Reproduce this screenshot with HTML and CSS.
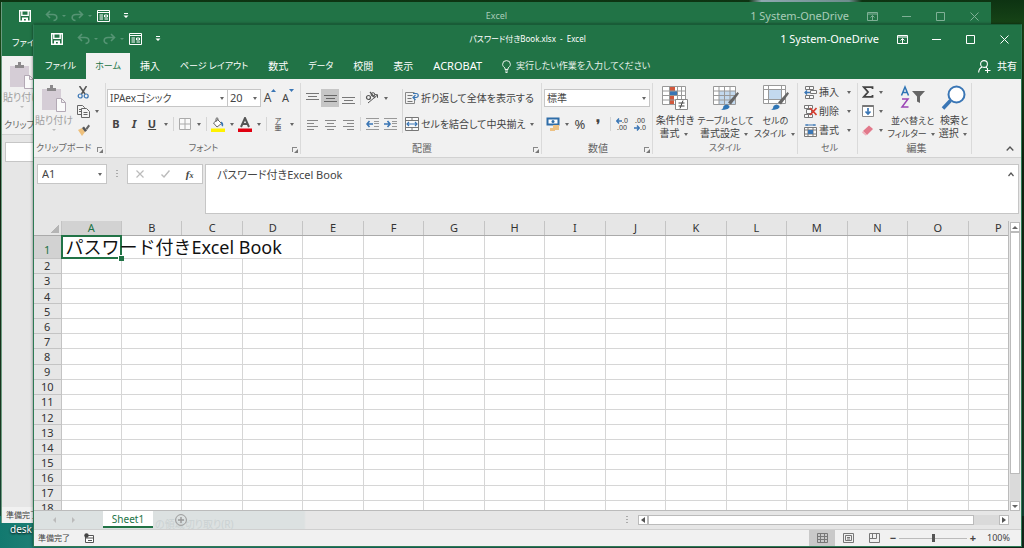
FILE: index.html
```html
<!DOCTYPE html>
<html lang="ja">
<head>
<meta charset="utf-8">
<title>パスワード付きBook.xlsx - Excel</title>
<link rel="stylesheet" href="styles.css">
</head>
<body>
<svg class="defs" aria-hidden="true">
  <symbol id="i-save" viewBox="0 0 12 12"><path fill="none" stroke="currentColor" stroke-width="1.4" d="M.7.7h10.6v10.6H.7zM2.8 1v4.4h6.4V1"/><path fill="currentColor" d="M3 7.5h6V11H6.800V9H5v2H3z"/></symbol>
  <symbol id="i-undo" viewBox="0 0 13 12"><path fill="none" stroke="currentColor" stroke-width="1.600" d="M5 1 1.500 4.500 5 8M1.500 4.500h6.500c5 0 5 6 .5 6"/></symbol>
  <symbol id="i-redo" viewBox="0 0 13 12"><path fill="none" stroke="currentColor" stroke-width="1.600" d="M8 1l3.500 3.500L8 8M11.500 4.500H5c-5 0-5 6-.5 6"/></symbol>
  <symbol id="i-form" viewBox="0 0 13 12"><path fill="none" stroke="currentColor" d="M.5.5h12v11H.5zM.5 2.500h12"/><path stroke="currentColor" d="M2.500 5H6M2.500 7H6M2.500 9H6M7.500 9H11M7.500 5h3v2h-3z" fill="none"/></symbol>
  <symbol id="i-more" viewBox="0 0 6 6"><path fill="currentColor" d="M1 0h4v1H1zM.5 2.500h5L3 5z"/></symbol>
  <symbol id="i-ribbonopt" viewBox="0 0 11 9"><path fill="none" stroke="currentColor" d="M.5.5h10v8H.5zM.5 2h10M5.500 8V3.500M3.500 5.500l2-2 2 2"/></symbol>
  <symbol id="i-paste" viewBox="0 0 24 27"><path fill="#d5cdd6" d="M0 4h19v21H0z"/><path fill="#8c8a8c" d="M5 3h3V0h3v3h3v3H5z"/><path fill="#fafafa" stroke="#b3a9b5" d="M14.500 13.500h5l4 4v9h-9zM19.500 13.500v4h4"/></symbol>
</svg>

<span class="desk-label">desk</span>

<section class="window window-back" aria-label="Excel">
  <header class="titlebar">
    <div class="quick">
      <button class="q" aria-label="上書き保存"><svg width="12" height="12"><use href="#i-save"/></svg></button>
      <button class="q dim drop" aria-label="元に戻す"><svg width="13" height="12"><use href="#i-undo"/></svg></button>
      <button class="q dim drop" aria-label="やり直し"><svg width="13" height="12"><use href="#i-redo"/></svg></button>
      <button class="q" aria-label="フォーム"><svg width="13" height="12"><use href="#i-form"/></svg></button>
      <button class="q" aria-label="カスタマイズ"><svg width="6" height="6"><use href="#i-more"/></svg></button>
    </div>
    <h2 class="title">Excel</h2>
    <div class="sys">
      <span class="account">1 System-OneDrive</span>
      <button class="w" aria-label="リボンの表示"><svg width="11" height="9"><use href="#i-ribbonopt"/></svg></button>
      <button class="w" aria-label="最小化"><svg width="9" height="9"><path d="M0 4.500h9" stroke="currentColor"/></svg></button>
      <button class="w" aria-label="最大化"><svg width="9" height="9"><path d="M.5.5h8v8h-8z" fill="none" stroke="currentColor"/></svg></button>
      <button class="w" aria-label="閉じる"><svg width="9" height="9"><path d="M.5.5l8 8M8.500.5l-8 8" stroke="currentColor"/></svg></button>
    </div>
  </header>
  <nav class="tabs"><button class="tab kana">ファイル</button></nav>
  <div class="ribbon">
    <div class="group g-clip">
      <div class="body"><button class="big muted drop-below"><svg width="24" height="27"><use href="#i-paste"/></svg>貼り付け</button></div>
      <div class="label kana">クリップボード</div>
    </div>
  </div>
  <div class="back-body"><div class="back-name"></div></div>
  <footer class="status">準備完了</footer>
</section>

<main class="window window-front">
  <header class="titlebar">
    <div class="quick">
      <button class="q" aria-label="上書き保存"><svg width="12" height="12"><use href="#i-save"/></svg></button>
      <button class="q dim drop" aria-label="元に戻す"><svg width="13" height="12"><use href="#i-undo"/></svg></button>
      <button class="q dim drop" aria-label="やり直し"><svg width="13" height="12"><use href="#i-redo"/></svg></button>
      <button class="q" aria-label="フォーム"><svg width="13" height="12"><use href="#i-form"/></svg></button>
      <button class="q" aria-label="カスタマイズ"><svg width="6" height="6"><use href="#i-more"/></svg></button>
    </div>
    <h1 class="title">パスワード付きBook.xlsx&nbsp; -&nbsp; Excel</h1>
    <div class="sys">
      <span class="account">1 System-OneDrive</span>
      <button class="w" aria-label="リボンの表示"><svg width="11" height="9"><use href="#i-ribbonopt"/></svg></button>
      <button class="w" aria-label="最小化"><svg width="9" height="9"><path d="M0 4.500h9" stroke="currentColor"/></svg></button>
      <button class="w" aria-label="最大化"><svg width="9" height="9"><path d="M.5.5h8v8h-8z" fill="none" stroke="currentColor"/></svg></button>
      <button class="w" aria-label="閉じる"><svg width="9" height="9"><path d="M.5.5l8 8M8.500.5l-8 8" stroke="currentColor"/></svg></button>
    </div>
  </header>

  <nav class="tabs">
    <button class="tab kana">ファイル</button>
    <button class="tab kana active">ホーム</button>
    <button class="tab">挿入</button>
    <button class="tab kana">ページ レイアウト</button>
    <button class="tab">数式</button>
    <button class="tab kana">データ</button>
    <button class="tab">校閲</button>
    <button class="tab">表示</button>
    <button class="tab latin">ACROBAT</button>
    <button class="tab tell"><svg width="9" height="13" viewBox="0 0 9 13" fill="none" stroke="currentColor"><path d="M3 9.500V8C1.500 7 .6 5.800.6 4.300a3.900 3.700 0 0 1 7.800 0C8.400 5.800 7.500 7 6 8v1.500zM3 11h3M3.500 12.500h2"/></svg><span class="kana">実行したい作業を入力してください</span></button>
    <button class="tab share"><svg width="13" height="13" viewBox="0 0 13 13" fill="none" stroke="currentColor" stroke-width="1.100"><circle cx="6" cy="4" r="3.400"/><path d="M.6 12.500c.3-3.300 1.500-4.800 3.600-5.500M7.800 7l1.200 1M9.500 8v5M7 10.500h5.500"/></svg>共有</button>
  </nav>

  <div class="ribbon">
    <div class="group g-clip">
      <div class="body">
        <button class="big muted drop-below"><svg width="24" height="27"><use href="#i-paste"/></svg>貼り付け</button>
        <div class="stack">
          <button class="b" aria-label="切り取り"><svg width="13" height="13" viewBox="0 0 13 13" fill="none"><path d="M2.500 0l5.500 8M9.500 0L4.500 8" stroke="#555" stroke-width="1.500"/><circle cx="3.200" cy="10" r="2" stroke="#3a76b5" stroke-width="1.200"/><circle cx="9.200" cy="10" r="2" stroke="#3a76b5" stroke-width="1.200"/></svg></button>
          <button class="b drop" aria-label="コピー"><svg width="13" height="13" viewBox="0 0 13 13" fill="#f4f4f4" stroke="#666"><path d="M.5.5h5l2 2v7h-7zM2 4.500h3M2 6.500h3"/><path d="M4.500 3.500h5l3 3v6h-8zM6.500 7.500h4M6.500 9.500h4"/></svg></button>
          <button class="b" aria-label="書式のコピー"><svg width="13" height="12" viewBox="0 0 13 12"><path d="M1 6l4-2 3 4-3 4z" fill="#eec07c"/><path d="M5 4l2-1.500 3 4L8 8z" fill="#555"/><path d="M8.500 4.500l3-4 1.500 1.500-3 4z" fill="#666"/></svg></button>
        </div>
      </div>
      <div class="label kana">クリップボード<i class="launch"></i></div>
    </div>

    <div class="group g-font">
      <div class="body rows">
        <div class="row">
          <span class="pick font-name"><input aria-label="フォント" value="IPAexゴシック"></span>
          <span class="pick font-size"><input aria-label="フォント サイズ" value="20"></span>
          <button class="b grow" aria-label="フォント サイズの拡大">A<svg width="5" height="4"><path d="M0 3l2.500-3L5 3z" fill="#3a76b5"/></svg></button>
          <button class="b grow small" aria-label="フォント サイズの縮小">A<svg width="5" height="4"><path d="M0 0h5L2.500 3z" fill="#3a76b5"/></svg></button>
        </div>
        <div class="row">
          <button class="b"><b>B</b></button><button class="b"><b><em>I</em></b></button><button class="b"><b><u>U</u></b></button><i class="ar"></i><i class="sep"></i>
          <button class="b" aria-label="罫線"><svg width="12" height="12"><path d="M.5.5h11v11H.5zM6 .5v11M.5 6h11" fill="#fafafa" stroke="#aaa"/></svg></button><i class="ar"></i><i class="sep"></i>
          <button class="b" aria-label="塗りつぶしの色"><svg width="14" height="15"><path d="M2.500 6l4-3.500 4 4-4.500 3.500z" fill="#fff" stroke="#666"/><path d="M5 5V1.500q1-1.500 2 0V4" fill="none" stroke="#666"/><path d="M10 4.500q3 1 2 5-1.500 0-2-3z" fill="#3a76b5"/><path d="M0 11.500h14V15H0z" fill="#fff200"/></svg></button><i class="ar"></i>
          <button class="b" aria-label="フォントの色"><svg width="14" height="15"><path d="M3 10L7 1l4 9M4.300 7h5.400" fill="none" stroke="#555" stroke-width="2"/><path d="M0 11.500h14V15H0z" fill="#e00010"/></svg></button><i class="ar"></i><i class="sep"></i>
          <button class="b ruby" aria-label="ふりがな"><span>ア</span><span>亜</span></button><i class="ar"></i>
        </div>
      </div>
      <div class="label kana">フォント<i class="launch"></i></div>
    </div>

    <div class="group g-align">
      <div class="body">
        <div class="rows fixed">
          <div class="row">
            <button class="b" aria-label="上揃え"><svg width="13" height="13"><path d="M0 1.500h13M2 4.500h9M0 7.500h13" stroke="#777"/></svg></button><button class="b on" aria-label="上下中央揃え"><svg width="13" height="13"><path d="M0 3.500h13M2 6.500h9M0 9.500h13" stroke="#666"/></svg></button><button class="b" aria-label="下揃え"><svg width="13" height="13"><path d="M0 5.500h13M2 8.500h9M0 11.500h13" stroke="#777"/></svg></button><i class="sep"></i>
            <button class="b" aria-label="方向"><svg width="14" height="14"><path d="M3 12L12.500 4M9.500 3.500l3 .3v3" fill="none" stroke="#555"/><circle cx="3.500" cy="6.500" r="2" fill="none" stroke="#555" stroke-width="1.200"/><path d="M5 1l5 6" stroke="#555" stroke-width="1.200"/><circle cx="8" cy="3.500" r="1.800" fill="none" stroke="#555"/></svg></button><i class="ar"></i>
          </div>
          <div class="row">
            <button class="b" aria-label="左揃え"><svg width="11" height="11"><path d="M0 1.500h11M0 4.500h7M0 7.500h11M0 10.500h7" stroke="#888"/></svg></button><button class="b" aria-label="中央揃え"><svg width="11" height="11"><path d="M0 1.500h11M2 4.500h7M0 7.500h11M2 10.500h7" stroke="#888"/></svg></button><button class="b" aria-label="右揃え"><svg width="11" height="11"><path d="M0 1.500h11M4 4.500h7M0 7.500h11M4 10.500h7" stroke="#888"/></svg></button><i class="sep"></i>
            <button class="b" aria-label="インデントを減らす"><svg width="13" height="12"><path d="M0 .5h13M8 3.500h5M8 5.500h5M8 8.500h5M0 11.500h13" stroke="#999"/><path d="M7 6H1M3.500 3L1 6l2.500 3" fill="none" stroke="#3a76b5" stroke-width="1.600"/></svg></button><button class="b" aria-label="インデントを増やす"><svg width="13" height="12"><path d="M0 .5h13M8 3.500h5M8 5.500h5M8 8.500h5M0 11.500h13" stroke="#999"/><path d="M0 6h6M3.500 3L6 6 3.500 9" fill="none" stroke="#3a76b5" stroke-width="1.600"/></svg></button>
          </div>
        </div>
        <i class="sep"></i>
        <div class="rows">
          <button class="row wide"><svg width="14" height="14"><path d="M.5 1.500h9M.5 12.500h9M.5 1.500v11M9.500 8v4.500" fill="none" stroke="#888"/><path d="M2.500 4.500h5M2.500 7.500h4M2.500 10.500h5" stroke="#777"/><path d="M8 2.500h3c3 0 3 4 0 4H8.500M10.500 4l-2.500 2.500 2.500 2.500" fill="none" stroke="#3a76b5" stroke-width="1.200"/></svg>折り返して全体を表示する</button>
          <button class="row wide"><svg width="14" height="14"><path d="M.5.5h13v13H.5zM.5 3.500h13M.5 10.500h13M7 .5v3M7 10.500v3" fill="#fafafa" stroke="#777"/><path d="M2 7h10M4 5L2 7l2 2M10 5l2 2-2 2" fill="none" stroke="#3a76b5" stroke-width="1.200"/></svg>セルを結合して中央揃え<i class="ar"></i></button>
        </div>
      </div>
      <div class="label">配置<i class="launch"></i></div>
    </div>

    <div class="group g-num">
      <div class="body rows">
        <div class="row"><span class="pick number"><select aria-label="表示形式"><option>標準</option></select></span></div>
        <div class="row">
          <button class="b" aria-label="通貨表示形式"><svg width="15" height="14"><path d="M1.500 1.500h11v6h-11z" fill="#fff" stroke="#2f6da8" stroke-width="2"/><circle cx="7" cy="4.500" r="1.500" fill="#2f6da8"/><path d="M7 8h6v5H7zM4 11h5v3H4z" fill="#edc183"/></svg></button><i class="ar"></i><button class="b pct">%</button><button class="b pct"><b>❜</b></button><i class="sep"></i>
          <button class="b dec" aria-label="小数点以下の表示桁数を増やす"><span><svg width="6" height="6"><path d="M6 3H1M3 .5L.8 3 3 5.500" fill="none" stroke="#3a76b5" stroke-width="1.400"/></svg>.0</span><span>.00</span></button><button class="b dec" aria-label="小数点以下の表示桁数を減らす"><span>.00</span><span><svg width="6" height="6"><path d="M0 3h5M3 .5L5.200 3 3 5.500" fill="none" stroke="#3a76b5" stroke-width="1.400"/></svg>.0</span></button>
        </div>
      </div>
      <div class="label">数値<i class="launch"></i></div>
    </div>

    <div class="group g-style">
      <div class="body">
        <button class="big s1"><svg width="26" height="26"><path d="M.5 1.500h23v18H.5z" fill="#fff"/><path d="M8 1h5v5H8zM8 10h4v9H8z" fill="#d2583c"/><path d="M8 6h8v4H8z" fill="#3a76b5"/><path d="M.5 1.500h23v18H.5zM.5 6h23M.5 10.500h23M.5 15h23M7.500 1.500v18M15.500 1.500v18M19.500 1.500v18" fill="none" stroke="#999"/><path d="M13.500 14.500h12v10h-12z" fill="#fff" stroke="#888"/><path d="M16.500 18h6M16.500 21h6M21 15.500l-3 8" stroke="#444"/></svg><span>条件付き<br>書式<i class="ar"></i></span></button>
        <button class="big s2"><svg width="26" height="26"><path d="M.5 1.500h22v18H.5z" fill="#fff"/><path d="M6 6h17v13H6z" fill="#c3d9ee"/><path d="M.5 1.500h22v18H.5zM.5 6h22M.5 10.500h22M.5 15h22M6 1.500v18M11.500 1.500v18M17 1.500v18" fill="none" stroke="#999"/><path d="M24.500 7l1.500 1.500-8 11-3-2z" fill="#666"/><path d="M7 25q3 0 3.500-4 3-3 6 0 1 4-9.500 4z" fill="#2f75b5"/></svg><span><span class="kana">テーブルとして</span><br>書式設定<i class="ar"></i></span></button>
        <button class="big s3"><svg width="26" height="26"><path d="M.5.5h22v18H.5z" fill="#fff"/><path d="M6 5h12v9H6z" fill="#c3d9ee"/><path d="M.5.5h22v18H.5zM.5 4.500h22M.5 14.500h22M5.500.5v18M18.500.5v18" fill="none" stroke="#999"/><path d="M24.500 7l1.500 1.500-8 11-3-2z" fill="#666"/><path d="M7 25q3 0 3.500-4 3-3 6 0 1 4-9.500 4z" fill="#2f75b5"/></svg><span class="kana">セルの<br>スタイル<i class="ar"></i></span></button>
      </div>
      <div class="label kana">スタイル</div>
    </div>

    <div class="group g-cell">
      <div class="body">
        <div class="stack cells">
          <button><svg width="13" height="13"><path d="M1.500.5h8v3h-8zM1.500 9.500h8v3h-8zM5.500.5v3M5.500 9.500v3M6.500 4.500h6v3h-6z" fill="#fafafa" stroke="#777"/><path d="M6 6.500H1M3 4.500L1 6.500l2 2" stroke="#3a76b5" stroke-width="1.300" fill="none"/></svg>挿入<i class="ar"></i></button>
          <button><svg width="13" height="13"><path d="M.5.5h8v3h-8zM.5 9.500h8v3h-8zM4.500.5v3M4.500 9.500v3M2.500 4.500h5v4h-5z" fill="#fafafa" stroke="#777"/><path d="M6 3l6.500 7M12.500 3L6 10" stroke="#d63c2e" stroke-width="1.600"/></svg>削除<i class="ar"></i></button>
          <button><svg width="13" height="13"><path d="M.5 3.500h12v9H.5zM.5 6h12M.5 10h12M4 3.500v9M9 3.500v9" fill="#fafafa" stroke="#777"/><path d="M4 6h5v4H4z" fill="#3a76b5"/><path d="M1 1h11M3 0v2M10 0v2" stroke="#3a76b5"/></svg>書式<i class="ar"></i></button>
        </div>
      </div>
      <div class="label kana">セル</div>
    </div>

    <div class="group g-edit">
      <div class="body">
        <div class="stack edits">
          <button aria-label="オート SUM"><svg width="12" height="12"><path d="M10.500 3V1.200H1.800L6 6l-4.200 4.800h8.700V9" fill="none" stroke="#444" stroke-width="1.800"/></svg><i class="ar"></i></button>
          <button aria-label="フィル"><svg width="12" height="12"><path d="M.5.5h11v11H.5z" fill="#fff" stroke="#888"/><path d="M.5 1h11" stroke="#777" stroke-width="2"/><path d="M6 3v6M3.500 6.500L6 9l2.500-2.500" fill="none" stroke="#3a76b5" stroke-width="1.700"/></svg><i class="ar"></i></button>
          <button aria-label="クリア"><svg width="12" height="12"><path d="M1 7l6-5.500 4 3.500-6 6z" fill="#e2798b"/><path d="M1 7l4 4-1.500.5L0 8.500z" fill="#f0b0bb"/></svg><i class="ar"></i></button>
        </div>
        <button class="big e1"><svg width="26" height="26"><path d="M1.500 10.500L5 2l3.500 8.500M2.700 7.500h4.600" fill="none" stroke="#2f75b5" stroke-width="1.500"/><path d="M2 14h6l-6 8h6.500" fill="none" stroke="#9b45b5" stroke-width="1.500"/><path d="M12 6h13l-5 5.500V18l-3-1.500v-5z" fill="#666"/></svg><span class="kana">並べ替えと<br>フィルター<i class="ar"></i></span></button>
        <button class="big e2"><svg width="26" height="26"><circle cx="15.500" cy="9.500" r="8" fill="#fff" stroke="#3a76b5" stroke-width="2"/><path d="M9.500 15.500L2 23.500" stroke="#3a76b5" stroke-width="3.500"/></svg><span>検索と<br>選択<i class="ar"></i></span></button>
      </div>
      <div class="label">編集</div>
    </div>
    <button class="collapse" aria-label="リボンを折りたたむ"><svg width="8" height="5"><path d="M.7 4.500L4 1l3.300 3.500" fill="none" stroke="#555" stroke-width="1.300"/></svg></button>
  </div>

  <div class="formula">
    <span class="pick name"><input aria-label="名前ボックス" value="A1"></span>
    <i class="dots"></i>
    <div class="fx">
      <button aria-label="キャンセル"><svg width="8" height="8"><path d="M.5.5l7 7M7.500.5l-7 7" stroke="#bbb" stroke-width="1.200"/></svg></button>
      <button aria-label="入力"><svg width="9" height="8"><path d="M.5 4.500L3 7l5.500-6.500" fill="none" stroke="#bbb" stroke-width="1.400"/></svg></button>
      <button class="fn" aria-label="関数の挿入"><em>f<small>x</small></em></button>
    </div>
    <div class="entry"><textarea aria-label="数式バー">パスワード付きExcel Book</textarea><svg width="6" height="5"><path d="M.5 4L3 1l2.500 3" fill="none" stroke="#555" stroke-width="1.200"/></svg></div>
  </div>

  <div class="sheet">
    <div class="grid-wrap"><table class="grid"><thead><tr id="cols"><th class="corner"></th></tr></thead><tbody id="cells"></tbody></table></div>
    <div class="vscroll"><button class="sb" aria-label="上へ"><i class="tri up"></i></button><div class="track"><div class="thumb"></div></div><button class="sb" aria-label="下へ"><i class="tri down"></i></button></div>
  </div>

  <div class="sheetbar">
    <span class="ghost">の領域切り取り(R)</span>
    <button class="nav" aria-label="前のシート"><i class="tri left"></i></button>
    <button class="nav" aria-label="次のシート"><i class="tri right"></i></button>
    <button class="sheet-tab">Sheet1</button>
    <button class="add" aria-label="新しいシート"><svg width="12" height="12"><circle cx="6" cy="6" r="5.400" fill="none" stroke="#999"/><path d="M6 3v6M3 6h6" stroke="#999" stroke-width="1.400"/></svg></button>
    <i class="dots"></i>
    <div class="hscroll"><button class="sb" aria-label="左へ"><i class="tri left"></i></button><div class="track"><div class="thumb"></div></div><button class="sb" aria-label="右へ"><i class="tri right"></i></button></div>
  </div>

  <footer class="status">
    <span>準備完了</span>
    <svg class="macro" width="10" height="10"><path d="M1.500 2.500h8v7h-8zM1.500 5h8M4 7.500h4" fill="#fff" stroke="#555"/><circle cx="2.500" cy="2.500" r="2.200" fill="#444"/></svg>
    <div class="views">
      <button class="on" aria-label="標準"><svg width="11" height="10"><path d="M.5.5h10v9H.5zM.5 3.500h10M.5 6.500h10M3.500.5v9M7.500.5v9" fill="none" stroke="#777"/></svg></button>
      <button aria-label="ページ レイアウト"><svg width="11" height="10"><path d="M.5.5h10v9H.5zM2.500 2.500h6v5h-6zM4 4.500h3M4 6h3" fill="none" stroke="#777"/></svg></button>
      <button aria-label="改ページ プレビュー"><svg width="11" height="10"><path d="M.5.5h10v9H.5zM3.500.5v5M.5 5.500h7M7.500.5v5" fill="none" stroke="#777"/></svg></button>
    </div>
    <button class="z" aria-label="縮小">−</button>
    <input class="zoom" type="range" min="0" max="100" value="50" aria-label="ズーム">
    <button class="z" aria-label="拡大">+</button>
    <span class="percent">100%</span>
  </footer>
</main>
<script src="grid.js"></script>
</body>
</html>
```
FILE: styles.css
```css
* { box-sizing: border-box; }
html, body { height: 100%; margin: 0; }
body {
  position: relative;
  overflow: hidden;
  font: 10px/12px "Noto Sans", "Noto Sans CJK JP", sans-serif;
  font-feature-settings: "palt";
  color: #444;
  background:
    linear-gradient(90deg, transparent 15%, #8fa8b0 19%, #6d8c8c 46%, transparent 50%) 700px 0 / 324px 3px no-repeat,
    linear-gradient(90deg, #12796f, #3c8e84 12%, #17766b 35%, #2f5a4c 60%, #2c3a30 80%, #14281b) 0 100% / 100% 32px no-repeat,
    linear-gradient(180deg, #0d3312, #1a4a18 6%, #10240f 30%, #1b3a22 80%, #144a40);
}
button, input, select, textarea {
  font: inherit;
  font-feature-settings: inherit;
  color: inherit;
  margin: 0;
  padding: 0;
  border: 0;
  border-radius: 0;
  background: none;
  outline: 0;
}
button { display: flex; align-items: center; justify-content: center; white-space: nowrap; }
svg { display: block; flex: none; }
i { display: block; flex: none; }
em, u { line-height: 12px; }
.defs { position: absolute; width: 0; height: 0; }

.desk-label { position: absolute; left: 10px; bottom: 13px; font-size: 10px; color: #fff; text-shadow: 0 1px 2px #000; }

/* windows */
.window { position: absolute; display: flex; flex-direction: column; background: #e6e6e6; overflow: hidden; }
.window-back { left: 1px; right: 33px; top: 2px; bottom: 25px; border-left: 1px solid #6b9a80; }
.window-front { left: 33px; right: 2px; top: 24px; bottom: 1px; border: 1px solid #2e7a55; border-top-color: #185c37; box-shadow: 0 0 3px rgba(0, 0, 0, .5); }
.window-back .titlebar { color: #a9ccb8; }

.titlebar { display: grid; grid-template-columns: 1fr auto 1fr; align-items: center; flex: none; height: 28px; background: #217346; color: #fff; }
.quick { display: flex; align-items: center; padding-left: 15px; }
.q { position: relative; width: 26px; height: 20px; justify-content: start; padding-left: 2px; }
.window-back .q:not(.dim) { color: #fff; }
.q.dim { color: #569474; }
.q.drop::after { content: ""; margin-left: 4px; border: 2px solid transparent; border-top-color: currentColor; border-bottom: 0; }
.title { margin: 0; font-size: 8px; font-weight: 400; line-height: 12px; }
.window-back .title { font-size: 9px; }
.sys { display: flex; align-items: center; justify-content: end; }
.account { font-size: 11px; line-height: 14px; padding-right: 6px; white-space: nowrap; }
.w { width: 34px; height: 20px; }
.window-back .w { color: #7fb096; }

.tabs { display: flex; flex: none; height: 26px; padding-left: 1px; background: #217346; color: #fff; }
.tab { padding: 0 10px; font-size: 10px; }
.kana, .tab.kana { font-size: 9px; }
.tab.latin { font-size: 11px; }
.tab.active { background: #f1f1f1; color: #217346; padding: 0 9px; }
.tab.tell { gap: 5px; color: #e6f1ea; }
.tab.share { margin-left: auto; gap: 6px; padding: 0 4px; }
.window-back .tab { padding-left: 9px; }

/* ribbon */
.ribbon { display: flex; flex: none; height: 79px; background: #f1f1f1; border-bottom: 1px solid #d2d2d2; padding: 4px 0 3px; }
.group { display: flex; flex-direction: column; flex: none; border-right: 1px solid #dadada; }
.body { display: flex; flex: 1; }
.label { position: relative; text-align: center; color: #666; line-height: 14px; height: 13px; white-space: nowrap; }
.launch { position: absolute; right: 3px; bottom: 2px; width: 5px; height: 5px; border: 1px solid #888; border-right: 0; border-bottom: 0; }
.launch::after { content: ""; position: absolute; right: -1px; bottom: -1px; border: 2px solid #777; border-left-color: transparent; border-top-color: transparent; }
.g-clip { width: 72px; padding-left: 2px; }
.g-clip .label { text-align: left; }
.g-font { width: 195px; padding-left: 1px; }
.g-align { width: 241px; padding-left: 2px; }
.g-num { width: 111px; padding-left: 2px; }
.g-style { width: 145px; }
.g-cell { width: 60px; padding-left: 4px; }
.g-edit { width: 114px; padding-left: 4px; }

.rows { display: flex; flex-direction: column; gap: 8px; padding-top: 6px; }
.fixed { width: 96px; }
.row { display: flex; align-items: center; height: 18px; }
.wide { gap: 2px; justify-content: start; }
.b { width: 18px; height: 18px; font-size: 11px; flex: none; }
.b.on { background: #c6c6c6; }
.ar { width: 9px; height: 3px; display: inline-flex; justify-content: center; align-items: center; }
.ar::after, .pick::after { content: ""; border: 2px solid transparent; border-top: 3px solid #666; border-bottom: 0; }
.sep { width: 6px; height: 14px; background: linear-gradient(#d5d5d5, #d5d5d5) 50% 0 / 1px 100% no-repeat; }
.g-align .body > .sep { height: 44px; margin-top: 6px; }
.pick { display: flex; align-items: center; flex: none; height: 18px; padding: 0 3px 0 2px; border: 1px solid #c6c6c6; background: #fff; }
.pick input, .pick select { flex: 1; min-width: 0; width: 0; appearance: none; }
.pick.font-name { width: 121px; font-size: 10px; }
.pick.font-size { width: 33px; border-left: 0; font-size: 11px; }
.pick.number { width: 106px; }
.grow { align-items: start; font-size: 12px; line-height: 18px; }
.grow.small { font-size: 11px; }
.ruby { flex-direction: column; font-size: 7px; line-height: 7px; }
.pct { font-size: 13px; }
.dec { flex-direction: column; font-size: 7px; line-height: 7px; align-items: center; }
.dec span { display: flex; align-items: center; }

.big { flex-direction: column; justify-content: start; line-height: 13px; gap: 3px; padding-top: 2px; text-align: center; }
.big .ar { vertical-align: middle; margin-left: 2px; }
.big.muted { width: 36px; color: #a0a0a0; gap: 2px; }
.drop-below::after { content: ""; border: 2px solid transparent; border-top-color: #bbb; border-bottom: 0; }
.s1 { width: 44px; } .s2 { width: 57px; } .s3 { width: 43px; }
.e1 { width: 50px; } .e2 { width: 34px; }
.stack { display: flex; flex-direction: column; padding-left: 2px; gap: 1px; }
.stack .b { width: 26px; justify-content: start; gap: 5px; padding-left: 3px; }
.stack .b.drop::after { content: ""; border: 2px solid transparent; border-top: 3px solid #666; border-bottom: 0; }
.cells button { height: 18px; gap: 2px; justify-content: start; }
.cells .ar { margin-left: 3px; }
.edits { padding-left: 0; width: 26px; }
.edits button { height: 18px; gap: 2px; justify-content: start; }
.collapse { margin: auto 5px 1px auto; width: 12px; height: 10px; }

/* formula bar */
.formula { display: flex; flex: none; align-items: start; padding: 6px 2px 7px 3px; }
.pick.name { width: 70px; height: 20px; font-size: 11px; padding: 0 4px; }
.dots { width: 2px; height: 8px; background: repeating-linear-gradient(#aaa 0 1px, transparent 1px 3px); }
.formula .dots { margin: 6px 9px 0; }
.fx { display: flex; width: 76px; height: 20px; border: 1px solid #c6c6c6; background: #fff; }
.fx button { flex: 1; }
.fn em { font: italic bold 11px "Liberation Serif", serif; }
.fn small { font-size: 8px; }
.entry { display: flex; flex: 1; height: 50px; margin-left: 2px; padding: 2px 4px 0 11px; border: 1px solid #c6c6c6; background: #fff; }
.entry textarea { flex: 1; resize: none; font-size: 11px; line-height: 16px; overflow: hidden; }
.entry svg { margin-top: 5px; }

/* worksheet */
.sheet { display: flex; flex: 1; min-height: 0; }
.grid-wrap { flex: 1; overflow: hidden; border-right: 1px solid #bbb; border-bottom: 1px solid #bbb; }
.grid { table-layout: fixed; width: 995px; height: 295px; border-collapse: collapse; font-size: 11px; line-height: 13px; color: #333; }
.grid th { font-weight: 400; padding: 0; height: 15px; background: #e6e6e6; border-right: 1px solid #c4c4c4; border-bottom: 1px solid #c4c4c4; overflow: hidden; }
.grid td { padding: 0; background: #fff; border: 1px solid #d6d6d6; }
.grid thead th { height: 14px; line-height: 12px; border-bottom-color: #aaa; }
.grid .corner { width: 27px; background: linear-gradient(135deg, transparent 50%, #b5b5b5 50%) 16px 3px / 9px 9px no-repeat #e6e6e6; }
.grid th.sel { background: #d2d2d2; color: #217346; }
.grid .tall th { height: 23px; vertical-align: bottom; line-height: 16px; }
.grid .tall td { border-top: 0; }
.grid td.cursor { position: relative; }
.cursor::before { content: ""; position: absolute; inset: -1px; border: 2px solid #217346; }
.cursor::after { content: ""; position: absolute; right: -3px; bottom: -3px; width: 5px; height: 5px; background: #217346; border: 1px solid #fff; border-right: 0; border-bottom: 0; }
.cursor span { position: absolute; z-index: 1; left: 4px; top: 0; line-height: 22px; font-size: 18px; color: #111; white-space: nowrap; background: linear-gradient(#fff, #fff) 58px 0 / 100% 100% no-repeat; font-feature-settings: normal; }

.sb { width: 10px; height: 10px; flex: none; border: 1px solid #bbb; background: #fff; }
.tri { border: 3px solid transparent; }
.tri.up { border-bottom: 3px solid #666; border-top: 0; }
.tri.down { border-top: 3px solid #666; border-bottom: 0; }
.tri.left { border-right: 4px solid #555; border-left: 0; }
.tri.right { border-left: 4px solid #555; border-right: 0; }
.vscroll { display: flex; flex-direction: column; width: 12px; padding: 1px 1px 0; }
.vscroll .track { flex: 1; background: #dadada; }
.vscroll .thumb { height: 90%; border: 1px solid #bbb; background: #fff; }

.sheetbar { position: relative; display: flex; flex: none; align-items: center; height: 19px; background: linear-gradient(90deg, #dce1e1 270px, #e6e6e6 272px); border-bottom: 1px solid #cfcfcf; }
.ghost { position: absolute; left: 121px; top: 8px; font-size: 10px; line-height: 11px; color: #cbd2d3; }
.nav { width: 19px; height: 14px; }
.nav:first-of-type { margin-left: 11px; }
.nav .tri.left { border-right: 3px solid #bbb; }
.nav .tri.right { border-left: 3px solid #bbb; }
.sheet-tab { position: relative; align-self: start; height: 17px; width: 50px; margin-left: 20px; background: #fff; border-bottom: 2px solid #217346; color: #217346; }
.add { position: relative; margin-left: 22px; }
.sheetbar .dots { margin-left: auto; }
.hscroll { display: flex; width: 371px; margin: 0 12px 0 10px; }
.hscroll .track { flex: 1; background: #dadada; }
.hscroll .thumb { width: 93%; height: 10px; border: 1px solid #bbb; background: #fff; }

.status { display: flex; flex: none; align-items: center; height: 16px; padding-left: 4px; background: #f1f1f1; font-size: 8px; white-space: nowrap; }
.macro { margin-left: 14px; }
.views { display: flex; margin-left: auto; }
.views button { width: 26px; height: 16px; }
.views .on { background: #c9c9c9; }
.z { width: 12px; font-size: 11px; font-weight: 700; }
.zoom { appearance: none; width: 68px; height: 10px; background: linear-gradient(#bbb, #bbb) 0 50% / 100% 1px no-repeat; }
.zoom::-webkit-slider-thumb { appearance: none; width: 3px; height: 8px; background: #555; }
.percent { width: 42px; padding-left: 8px; font-size: 9px; }

/* window behind */
.back-body { flex: 1; background: #e6e6e6; padding: 7px 3px; }
.back-name { width: 70px; height: 20px; border: 1px solid #c6c6c6; background: #fff; }
```
FILE: grid.js
```js
const letters = "ABCDEFGHIJKLMNOP".split("");
const cols = document.getElementById("cols");
letters.forEach((letter, i) => {
  const th = document.createElement("th");
  th.textContent = letter;
  if (i === 0) th.className = "sel";
  cols.append(th);
});

const cells = document.getElementById("cells");
for (let r = 1; r <= 18; r++) {
  const tr = document.createElement("tr");
  const th = document.createElement("th");
  th.textContent = r;
  tr.append(th);
  letters.forEach(() => tr.append(document.createElement("td")));
  if (r === 1) {
    tr.className = "tall";
    th.className = "sel";
    const td = tr.children[1];
    td.className = "cursor";
    const span = document.createElement("span");
    span.textContent = "パスワード付きExcel Book";
    td.append(span);
  }
  cells.append(tr);
}
```
